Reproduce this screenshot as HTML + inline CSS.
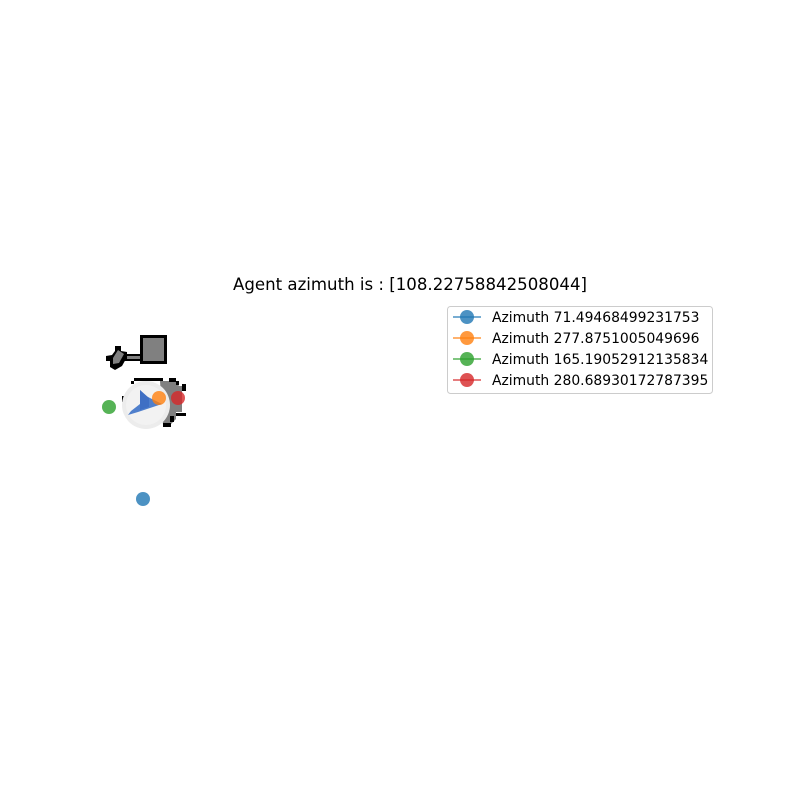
<!DOCTYPE html>
<html><head><style>
body{margin:0;background:#fff;width:800px;height:800px;overflow:hidden;font-family:"DejaVu Sans","Liberation Sans",sans-serif;}
</style></head><body>
<svg width="800" height="800" xmlns="http://www.w3.org/2000/svg">
<text x="410" y="290" font-size="16.6" text-anchor="middle" font-family="DejaVu Sans, sans-serif">Agent azimuth is : [108.22758842508044]</text>
<rect x="141.5" y="336.5" width="24" height="26" fill="#808080" stroke="#000" stroke-width="3"/>
<rect x="124" y="354" width="16" height="7" fill="#000"/>
<rect x="127" y="356" width="13" height="3" fill="#808080"/>
<polygon points="115,346 121,346 121,351 127,352 127,357 122,366 115,370 110,367 110,361 106,361 106,356 112,355 115,351" fill="#000"/>
<polygon points="118,350 124,354 119,363 113,364 113,358" fill="#808080"/>
<polygon points="160,381 176,381 179,386 182,386 182,412 176,412 176,419 170,425 163,425" fill="#808080"/>
<rect x="134" y="378" width="29" height="3" fill="#000"/>
<rect x="169" y="378" width="7" height="4" fill="#000"/>
<rect x="176" y="381" width="3" height="4" fill="#000"/>
<rect x="182" y="384" width="4" height="7" fill="#000"/>
<rect x="176" y="413" width="10" height="3" fill="#000"/>
<rect x="170" y="416" width="4" height="6" fill="#000"/>
<rect x="163" y="423" width="8" height="4" fill="#000"/>
<rect x="131" y="381" width="3" height="3" fill="#000"/>
<rect x="122" y="396" width="3" height="6" fill="#000"/>
<circle cx="146" cy="405" r="24" fill="#ececec"/>
<circle cx="146" cy="405" r="20" fill="#f2f2f2"/>
<polygon points="140,390 146,396 162,404 156,406 138,412 128,415 131,411 140,404" fill="#4f7fcc"/>
<polygon points="140,390 149,398 149,407 140,410" fill="#3f6fc4"/>
<circle cx="159" cy="398" r="7" fill="#ff7f0e" fill-opacity="0.8"/>
<circle cx="178" cy="398" r="7" fill="#d62728" fill-opacity="0.8"/>
<circle cx="109" cy="407" r="7" fill="#2ca02c" fill-opacity="0.8"/>
<circle cx="143" cy="499" r="7" fill="#1f77b4" fill-opacity="0.8"/>
<rect x="447.5" y="306.5" width="265" height="87" rx="3" fill="#fff" stroke="#ccc" stroke-width="1"/>
<g font-size="13.9" font-family="DejaVu Sans, sans-serif">
<line x1="453" y1="317" x2="481" y2="317" stroke="#1f77b4" stroke-opacity="0.8" stroke-width="1.5"/>
<circle cx="467" cy="317" r="7" fill="#1f77b4" fill-opacity="0.8"/>
<text x="492" y="322">Azimuth 71.49468499231753</text>
<line x1="453" y1="338" x2="481" y2="338" stroke="#ff7f0e" stroke-opacity="0.8" stroke-width="1.5"/>
<circle cx="467" cy="338" r="7" fill="#ff7f0e" fill-opacity="0.8"/>
<text x="492" y="343">Azimuth 277.8751005049696</text>
<line x1="453" y1="359" x2="481" y2="359" stroke="#2ca02c" stroke-opacity="0.8" stroke-width="1.5"/>
<circle cx="467" cy="359" r="7" fill="#2ca02c" fill-opacity="0.8"/>
<text x="492" y="364">Azimuth 165.19052912135834</text>
<line x1="453" y1="380" x2="481" y2="380" stroke="#d62728" stroke-opacity="0.8" stroke-width="1.5"/>
<circle cx="467" cy="380" r="7" fill="#d62728" fill-opacity="0.8"/>
<text x="492" y="385">Azimuth 280.68930172787395</text>
</g>
</svg>
</body></html>
